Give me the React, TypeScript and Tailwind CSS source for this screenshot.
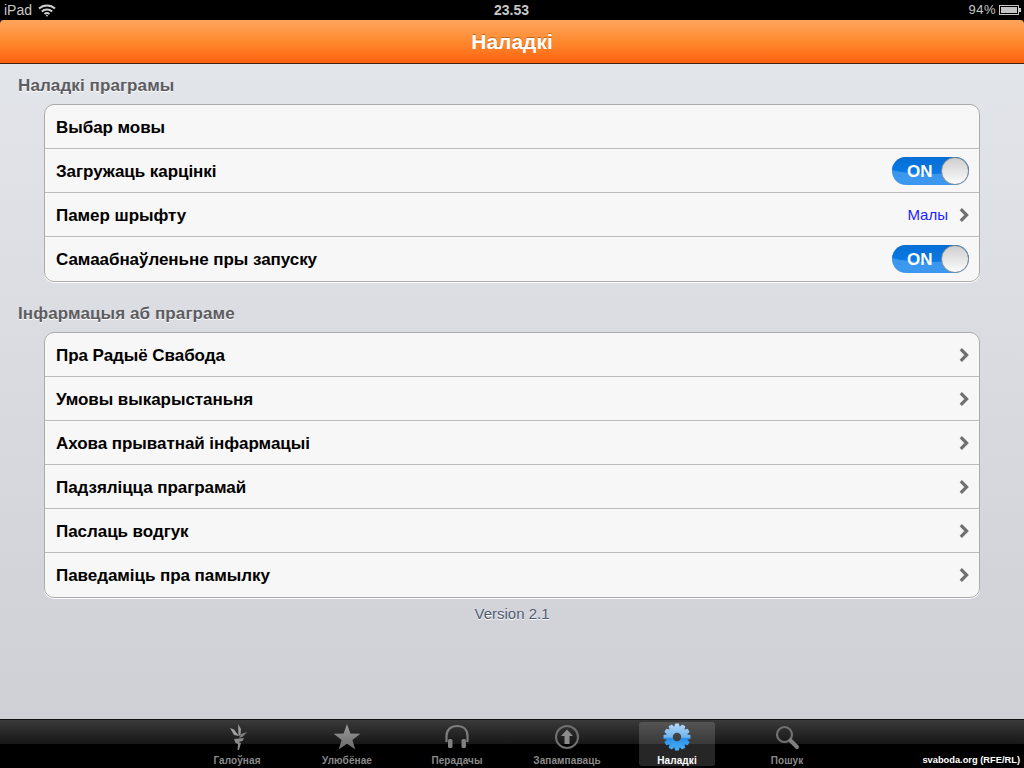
import React from "react";

function Chevron() {
  return (
    <svg width="10" height="14" viewBox="0 0 10 14" className="block">
      <path d="M1.8 1.2 L7.6 7 L1.8 12.8" fill="none" stroke="#707070" strokeWidth="3.2" strokeLinejoin="miter" />
    </svg>
  );
}

function Toggle() {
  return (
    <div className="relative h-[28px] w-[77px] overflow-hidden rounded-full bg-[#3d97ee]">
      <div className="absolute left-[-20px] right-[-20px] top-[-14px] h-[31px] rounded-b-[50%] bg-gradient-to-b from-[#0460c8] to-[#0a7ce6]" />
      <span className="absolute left-[15px] top-[5px] text-[17px] font-bold leading-[20px] text-white">ON</span>
      <div className="absolute right-0 top-0 h-[28px] w-[28px] rounded-full border border-[#8c8c8c] bg-gradient-to-b from-[#cfcfcf] to-[#fcfcfc]" />
    </div>
  );
}

function Row({ label, value, toggle, chevron, last }: { label: string; value?: string; toggle?: boolean; chevron?: boolean; last?: boolean }) {
  return (
    <div className={`flex h-[44px] items-center justify-between border-b pl-[11px] pr-[10px] ${last ? "border-transparent" : "border-[#bcbcbc]"}`}>
      <span className="pt-[2px] text-[17px] font-bold tracking-[-0.05px] text-black">{label}</span>
      <div className="flex items-center">
        {value && <span className="mr-[11px] pt-[1px] text-[15px] text-[#1c1cff]">{value}</span>}
        {chevron && <Chevron />}
        {toggle && <Toggle />}
      </div>
    </div>
  );
}

function Card({ children }: { children: React.ReactNode }) {
  return (
    <div className="mx-[44px] overflow-hidden rounded-[10px] border border-[#ababab] bg-[#f7f7f7] shadow-[0_1px_0_#ffffff]">{children}</div>
  );
}

function Title({ children }: { children: React.ReactNode }) {
  return <div className="pl-[18px] text-[17px] font-bold leading-[18px] tracking-[0.1px] text-[#5c5c61] [text-shadow:0_1px_0_#ffffff]">{children}</div>;
}

function Wifi() {
  return (
    <svg width="18" height="13" viewBox="0 0 18 13" fill="none" stroke="#d0d0d0" strokeWidth="2">
      <path d="M1 4.6 C5.5 0.4 12.5 0.4 17 4.6" />
      <path d="M3.8 7.4 C6.8 4.8 11.2 4.8 14.2 7.4" />
      <path d="M6.5 10 C8 8.8 10 8.8 11.5 10" />
      <circle cx="9" cy="11.6" r="0.9" fill="#d0d0d0" stroke="none" />
    </svg>
  );
}

function Battery() {
  return (
    <svg width="22" height="10" viewBox="0 0 22 10">
      <rect x="0.5" y="0.5" width="19" height="9" fill="none" stroke="#c8c8c8" />
      <rect x="2" y="2" width="16" height="6" fill="#c4c4c4" />
      <rect x="20" y="3" width="2" height="4" fill="#c8c8c8" />
    </svg>
  );
}

function TabIcon({ name }: { name: string }) {
  if (name === "home")
    return (
      <svg width="24" height="28" viewBox="0 0 24 28" fill="#8a8a8a">
        <path d="M13 1 L16 6 L15.5 12 L13.5 13 Z" fill="#9a9a9a" />
        <path d="M5 5 L9 6.5 L14 13 L9 12 Z" fill="#a0a0a0" />
        <path d="M22 9 L18 13.5 L14 15 L16 11 Z" fill="#808080" />
        <path d="M9 16 L19 15 L17.5 18 L13.5 19 L16 20 L14 27 L12.5 27 L13 21 L10.5 20 Z" fill="#8a8a8a" />
      </svg>
    );
  if (name === "star")
    return (
      <svg width="28" height="28" viewBox="0 0 28 28">
        <defs>
          <linearGradient id="tg" x1="0" y1="0" x2="0" y2="1">
            <stop offset="0" stopColor="#9a9a9a" />
            <stop offset="1" stopColor="#6a6a6a" />
          </linearGradient>
        </defs>
        <path d="M14 1 L17.4 10.6 L27.4 10.8 L19.4 16.9 L22.3 26.6 L14 20.8 L5.7 26.6 L8.6 16.9 L0.6 10.8 L10.6 10.6 Z" fill="url(#tg)" />
      </svg>
    );
  if (name === "phones")
    return (
      <svg width="26" height="26" viewBox="0 0 26 26" fill="none">
        <path d="M2.5 18 V12 C2.5 5.5 7 2 13 2 C19 2 23.5 5.5 23.5 12 V18" stroke="#7c7c7c" strokeWidth="2.2" />
        <rect x="4" y="15" width="4.5" height="9" rx="1.5" fill="#808080" />
        <rect x="17.5" y="15" width="4.5" height="9" rx="1.5" fill="#808080" />
      </svg>
    );
  if (name === "upload")
    return (
      <svg width="26" height="26" viewBox="0 0 26 26" fill="none">
        <circle cx="13" cy="13" r="11" stroke="#707070" strokeWidth="2" />
        <path d="M13 5.5 L19 12 H15.5 V20 H10.5 V12 H7 Z" fill="#8c8c8c" />
      </svg>
    );
  if (name === "gear") {
    const teeth = Array.from({ length: 12 }, (_, i) => i * 30);
    return (
      <svg width="28" height="28" viewBox="0 0 28 28">
        <defs>
          <linearGradient id="gg" x1="0" y1="0" x2="0" y2="1">
            <stop offset="0" stopColor="#b4d8f6" />
            <stop offset="0.5" stopColor="#72b4ee" />
            <stop offset="0.56" stopColor="#2a90ea" />
            <stop offset="1" stopColor="#49b0f4" />
          </linearGradient>
        </defs>
        <path
          fill="url(#gg)"
          fillRule="evenodd"
          d={
            teeth
              .map((a) => {
                const pt = (r: number, d: number) => {
                  const t = ((a + d) * Math.PI) / 180;
                  return `${(14 + r * Math.sin(t)).toFixed(2)} ${(14 - r * Math.cos(t)).toFixed(2)}`;
                };
                return `${a === 0 ? "M" : "L"}${pt(10.8, -14)} L${pt(13.6, -8)} L${pt(13.6, 8)} L${pt(10.8, 14)}`;
              })
              .join(" ") + " Z M14 9.8 A4.2 4.2 0 1 0 14 18.2 A4.2 4.2 0 1 0 14 9.8 Z"
          }
        />
      </svg>
    );
  }
  return (
    <svg width="26" height="26" viewBox="0 0 26 26" fill="none">
      <circle cx="10.5" cy="10.5" r="7.5" stroke="#707070" strokeWidth="2.2" />
      <path d="M16.5 16.5 L23 23" stroke="#808080" strokeWidth="4" strokeLinecap="round" />
    </svg>
  );
}

const tabs = [
  ["home", "Галоўная"],
  ["star", "Улюбёнае"],
  ["phones", "Перадачы"],
  ["upload", "Запампаваць"],
  ["gear", "Наладкі"],
  ["search", "Пошук"],
];

export default function App() {
  return (
    <div className="flex h-[768px] w-[1024px] flex-col overflow-hidden bg-black font-['Liberation_Sans',sans-serif]">
      <div className="relative flex h-[20px] items-center justify-between pl-[4px] pr-[3px] text-[14px] leading-[20px] text-[#c8c8c8]">
        <div className="flex items-center gap-[6px]">
          <span>iPad</span>
          <Wifi />
        </div>
        <span className="absolute left-0 right-0 pr-[1px] text-center text-[14px] font-bold">23.53</span>
        <div className="flex items-center gap-[3px]">
          <span className="text-[13px] tracking-[0.5px]">94%</span>
          <Battery />
        </div>
      </div>
      <div className="flex h-[44px] items-center justify-center rounded-t-[4px] border-b border-[#3a2412] bg-gradient-to-b from-[#ffa55c] via-[#ff8a2e] to-[#ff5f0a]">
        <span className="text-[21px] font-bold text-white [text-shadow:0_-1px_0_rgba(120,60,0,0.5)]">Наладкі</span>
      </div>
      <div className="flex flex-1 flex-col bg-gradient-to-b from-[#e2e5ea] to-[#cfd0d6] pt-[13px]">
        <Title>Наладкі праграмы</Title>
        <div className="mt-[9px]">
          <Card>
            <Row label="Выбар мовы" />
            <Row label="Загружаць карцінкі" toggle />
            <Row label="Памер шрыфту" value="Малы" chevron />
            <Row label="Самаабнаўленьне пры запуску" toggle last />
          </Card>
        </div>
        <div className="mt-[23px]">
          <Title>Інфармацыя аб праграме</Title>
        </div>
        <div className="mt-[9px]">
          <Card>
            <Row label="Пра Радыё Свабода" chevron />
            <Row label="Умовы выкарыстаньня" chevron />
            <Row label="Ахова прыватнай інфармацыі" chevron />
            <Row label="Падзяліцца праграмай" chevron />
            <Row label="Паслаць водгук" chevron />
            <Row label="Паведаміць пра памылку" chevron last />
          </Card>
        </div>
        <div className="mt-[8px] text-center text-[15px] leading-[16px] text-[#4f5a70] [text-shadow:0_1px_0_#ffffff]">Version 2.1</div>
      </div>
      <div className="relative h-[49px] border-t border-[#111111] bg-black">
        <div className="absolute inset-x-0 top-0 h-[24px] bg-gradient-to-b from-[#3a3a3a] to-[#171717]" />
        <div className="relative flex h-full items-start justify-center gap-[34px] pt-[2px]">
          {tabs.map(([icon, label]) => {
            const active = icon === "gear";
            return (
              <div key={icon} className={`flex h-[44px] w-[76px] flex-col items-center justify-between rounded-[3px] ${active ? "bg-white/15" : ""}`}>
                <div className="flex h-[28px] items-center justify-center pt-[2px]">
                  <TabIcon name={icon} />
                </div>
                <span className={`whitespace-nowrap text-[10px] font-bold leading-[11px] tracking-[0.1px] ${active ? "text-white" : "text-[#8a8a8a]"}`}>{label}</span>
              </div>
            );
          })}
        </div>
        <span className="absolute bottom-[2px] right-[4px] text-[9.3px] font-bold leading-[12px] text-white">svaboda.org (RFE/RL)</span>
      </div>
    </div>
  );
}
